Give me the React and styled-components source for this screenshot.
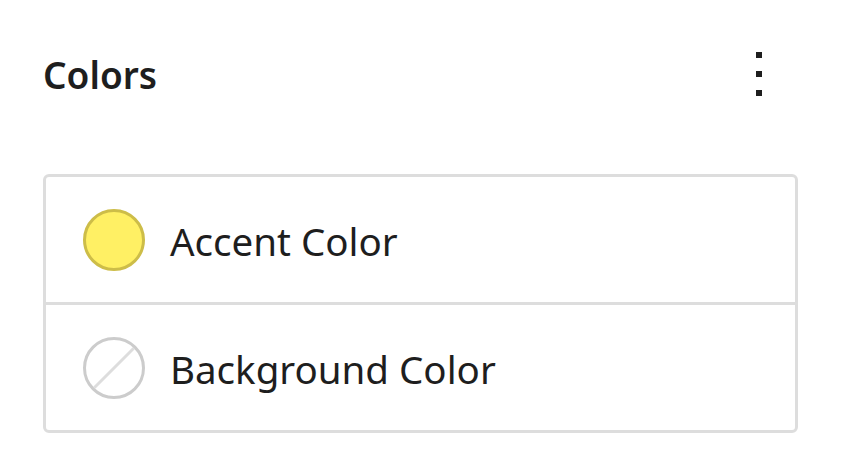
import React from "react";
import styled, { createGlobalStyle } from "styled-components";

const GlobalStyle = createGlobalStyle`
  body {
    margin: 0;
    background: #fff;
    font-family: "Noto Sans", "Open Sans", sans-serif;
    color: #1e1e1e;
  }
`;

const Panel = styled.div`
  width: 845px;
  height: 459px;
  padding: 0 47px 0 43px;
  box-sizing: border-box;
`;

const Header = styled.div`
  display: flex;
  align-items: center;
  justify-content: space-between;
  height: 148px;
`;

const Title = styled.h2`
  margin: 0;
  font-size: 37px;
  font-weight: 600;
  line-height: 1;
`;

const MenuButton = styled.button`
  display: flex;
  flex-direction: column;
  align-items: center;
  justify-content: center;
  gap: 13px;
  width: 40px;
  height: 60px;
  margin-right: 19px;
  border: none;
  background: none;
  padding: 0;
`;

const Dot = styled.span`
  width: 6px;
  height: 6px;
  background: #1e1e1e;
`;

const Card = styled.div`
  margin-top: 26px;
  border: 3px solid #dddddd;
  border-radius: 6px;
`;

const Row = styled.div`
  display: flex;
  align-items: center;
  gap: 25px;
  height: 125px;
  padding-left: 37px;
  & + & {
    border-top: 3px solid #dddddd;
  }
`;

const Swatch = styled.span`
  width: 56px;
  height: 56px;
  border-radius: 50%;
  border: 3px solid ${p => (p.empty ? "#cccccc" : "#cdbd48")};
  background: ${p => (p.empty ? "#fff" : "#fff064")};
  position: relative;
  flex: none;
  overflow: hidden;
  ${p =>
    p.empty &&
    `
    &::after {
      content: "";
      position: absolute;
      left: 50%;
      top: 50%;
      width: 72px;
      height: 3px;
      background: #dddddd;
      transform: translate(-50%, -50%) rotate(-45deg);
    }
  `}
`;

const Label = styled.span`
  font-size: 38.5px;
  line-height: 1;
  padding-top: 4px;
  color: #1e1e1e;
`;

export default function App() {
  return (
    <>
      <GlobalStyle />
      <Panel>
        <Header>
          <Title>Colors</Title>
          <MenuButton aria-label="Options">
            <Dot />
            <Dot />
            <Dot />
          </MenuButton>
        </Header>
        <Card>
          <Row>
            <Swatch />
            <Label>Accent Color</Label>
          </Row>
          <Row>
            <Swatch empty />
            <Label>Background Color</Label>
          </Row>
        </Card>
      </Panel>
    </>
  );
}
